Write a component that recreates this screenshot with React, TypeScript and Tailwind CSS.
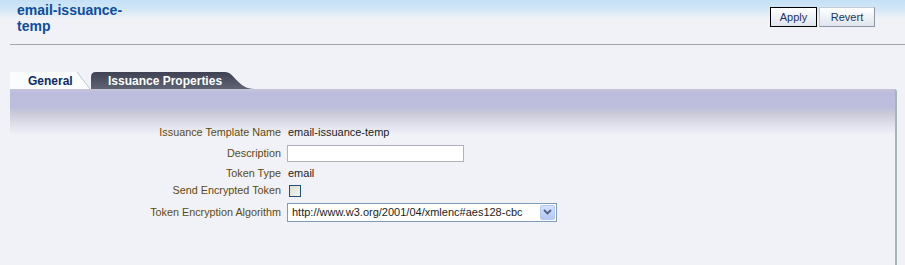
import React from 'react';

const labelCls = 'text-right text-[10.8px] leading-none text-[#5b4a14]';

function TabGeneral() {
  return (
    <div className="relative h-[17px] w-[81px]">
      <svg className="absolute inset-0" width="81" height="17" viewBox="0 0 81 17">
        <path d="M0 17 L0 0 L67 0 L80 17 Z" fill="#fbfcfe" />
        <path d="M67 0 L80 17" stroke="#b9cbd8" strokeWidth="1" fill="none" />
      </svg>
      <span className="relative block pl-[18px] pt-[2px] text-[12px] font-bold leading-[14px] text-[#0d2a66]">General</span>
    </div>
  );
}

function TabIssuance() {
  return (
    <div className="relative h-[17px] w-[165px]">
      <svg className="absolute inset-0" width="165" height="17" viewBox="0 0 165 17">
        <defs>
          <linearGradient id="tabg" x1="0" y1="0" x2="0" y2="1">
            <stop offset="0" stopColor="#3e4252" />
            <stop offset="1" stopColor="#5f6373" />
          </linearGradient>
        </defs>
        <path d="M0 17 L0 5 Q0 0 5 0 L134 0 C144 0 146 17 164 17 Z" fill="url(#tabg)" />
      </svg>
      <span className="relative block pl-[17px] pt-[2px] text-[12px] font-bold leading-[14px] text-white">
        Issuance Properties
      </span>
    </div>
  );
}

export default function App() {
  return (
    <div className="relative h-[265px] w-[905px] overflow-hidden bg-[#f1f2f7] font-['Liberation_Sans',Arial,sans-serif]">
      {/* Cabeçalho */}
      <div className="bg-[linear-gradient(to_bottom,#c4e0f6_0px,#d2e7f6_9px,#f1f2f7_19px)]">
        <div className="flex h-[44px] items-start justify-between pl-[17px] pr-[30px]">
          <h1 className="w-[112px] pt-[2px] text-[14px] font-bold leading-[16px] text-[#0d4d9c]">
            email-issuance-temp
          </h1>
          <div className="mt-[7px] flex gap-[2px]">
            <button className="h-[20px] w-[47px] border border-black bg-[linear-gradient(to_bottom,#ffffff,#dfe4ee)] text-[11px] text-[#1b3566]">
              Apply
            </button>
            <button className="h-[20px] w-[56px] border border-[#c4cad6] border-b-[#8e96a6] border-r-[#8e96a6] bg-[linear-gradient(to_bottom,#ffffff,#dfe4ee)] text-[11px] text-[#1b3566]">
              Revert
            </button>
          </div>
        </div>
      </div>
      <div className="ml-[10px] border-t border-[#a4a6ae]" />

      {/* Abas */}
      <div className="ml-[10px] mt-[27px] flex">
        <TabGeneral />
        <TabIssuance />
      </div>

      {/* Painel */}
      <div className="ml-[10px] h-[200px] w-[887px] rounded-tr-[3px] border-r-2 border-[#a6b5b9] bg-[linear-gradient(to_bottom,#c5c5d6_0px,#bcbcde_4px,#bdbddd_18px,#c9c9d9_24px,#dcdde8_34px,#f1f2f7_46px)] pt-[33px]">
        <div className="grid grid-cols-[271px_1fr] grid-rows-[20px_22px_18px_17px_26px] items-center gap-x-[6px]">
          <div className={labelCls}>Issuance Template Name</div>
          <div className="pl-[1px] text-[11px] leading-none text-[#1c1c1c]">email-issuance-temp</div>

          <div className={labelCls}>Description</div>
          <div className="h-[17px] w-[177px] border border-[#b1b1c2] bg-white" />

          <div className={labelCls}>Token Type</div>
          <div className="pl-[1px] text-[11px] leading-none text-[#1c1c1c]">email</div>

          <div className={labelCls}>Send Encrypted Token</div>
          <div className="pl-[2px]">
            <div className="h-[12px] w-[12px] border border-[#1f4f7a] bg-[linear-gradient(135deg,#dcdcd4,#f6f6f2)]" />
          </div>

          <div className={labelCls}>Token Encryption Algorithm</div>
          <div className="flex h-[19px] w-[270px] items-center border border-[#7f9db9] bg-white">
            <span className="flex-1 pl-[4px] text-[11px] leading-none text-[#1c1c1c]">
              http://www.w3.org/2001/04/xmlenc#aes128-cbc
            </span>
            <span className="mr-[1px] flex h-[15px] w-[15px] items-center justify-center rounded-[2px] border border-[#b7c9f1] bg-[linear-gradient(to_bottom,#d6e2fb,#b3c7f2)]">
              <svg width="9" height="6" viewBox="0 0 9 6">
                <path d="M1 1 L4.5 4.5 L8 1" stroke="#4d6185" strokeWidth="1.8" fill="none" />
              </svg>
            </span>
          </div>
        </div>
      </div>
    </div>
  );
}
